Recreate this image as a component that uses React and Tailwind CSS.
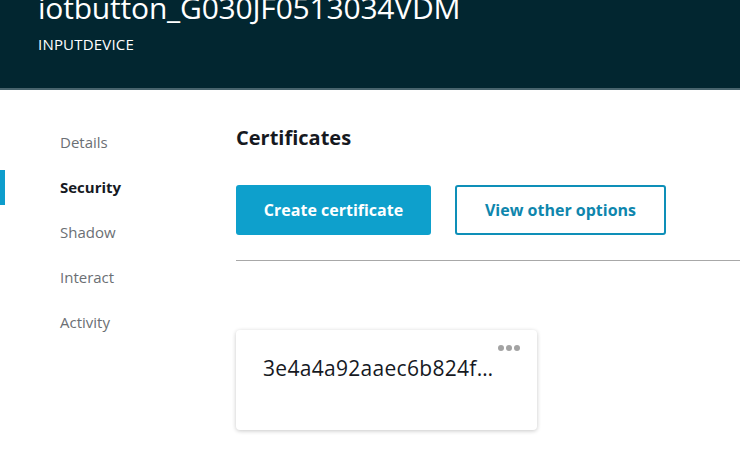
import React from 'react';

const navItems = ['Details', 'Security', 'Shadow', 'Interact', 'Activity'];

const App = () => {
    const active = 'Security';

    return (
        <div className="w-[740px] h-[465px] overflow-hidden bg-white" style={{ fontFamily: '"Open Sans", "Noto Sans", sans-serif' }}>
            {/* Header */}
            <div className="h-[90px] bg-[#022630] border-b-2 border-[#48646d] pl-[38px] overflow-hidden">
                <h1 className="text-[30px] leading-none text-white mt-[-7px] tracking-[-0.2px]">iotbutton_G030JF0513034VDM</h1>
                <p className="text-[15px] text-white mt-[10px] tracking-[0.2px]">INPUTDEVICE</p>
            </div>

            <div className="flex">
                {/* Sidebar */}
                <nav className="w-[236px] shrink-0 pt-[30px]">
                    {navItems.map((item) => (
                        <div key={item} className="relative h-[45px] flex items-center pl-[60px]">
                            {item === active && (
                                <span className="absolute left-0 top-[5px] w-[5px] h-[35px] bg-[#0e9dcc]"></span>
                            )}
                            <span className={`text-[15px] ${item === active ? 'font-bold text-[#16191f]' : 'text-[#6b6f74]'}`}>
                                {item}
                            </span>
                        </div>
                    ))}
                </nav>

                {/* Main */}
                <main className="flex-1 pt-[34px]">
                    <h2 className="text-[20px] font-bold text-[#16191f] leading-[28px]">Certificates</h2>
                    <div className="flex gap-[24px] mt-[33px]">
                        <button className="w-[195px] h-[50px] rounded-[3px] bg-[#0ea0cc] text-white text-[16px] font-bold">
                            Create certificate
                        </button>
                        <button className="w-[211px] h-[50px] rounded-[3px] border-2 border-[#0e8fb8] bg-white text-[#0e86ad] text-[16px] font-bold">
                            View other options
                        </button>
                    </div>
                    <div className="mt-[25px] h-px bg-[#a8a8a8]"></div>

                    <div className="relative mt-[69px] w-[301px] h-[100px] rounded-[4px] bg-white shadow-[0_1px_4px_rgba(0,0,0,0.22)] pl-[27px] pt-[24px]">
                        <div className="absolute right-[17px] top-[15px] flex gap-[2px]">
                            <span className="w-[6px] h-[6px] rounded-full bg-[#a3a3a3]"></span>
                            <span className="w-[6px] h-[6px] rounded-full bg-[#a3a3a3]"></span>
                            <span className="w-[6px] h-[6px] rounded-full bg-[#a3a3a3]"></span>
                        </div>
                        <p className="text-[21px] text-[#16191f] leading-[28px] tracking-[0.3px]">3e4a4a92aaec6b824f…</p>
                    </div>
                </main>
            </div>
        </div>
    );
};

export default App;
